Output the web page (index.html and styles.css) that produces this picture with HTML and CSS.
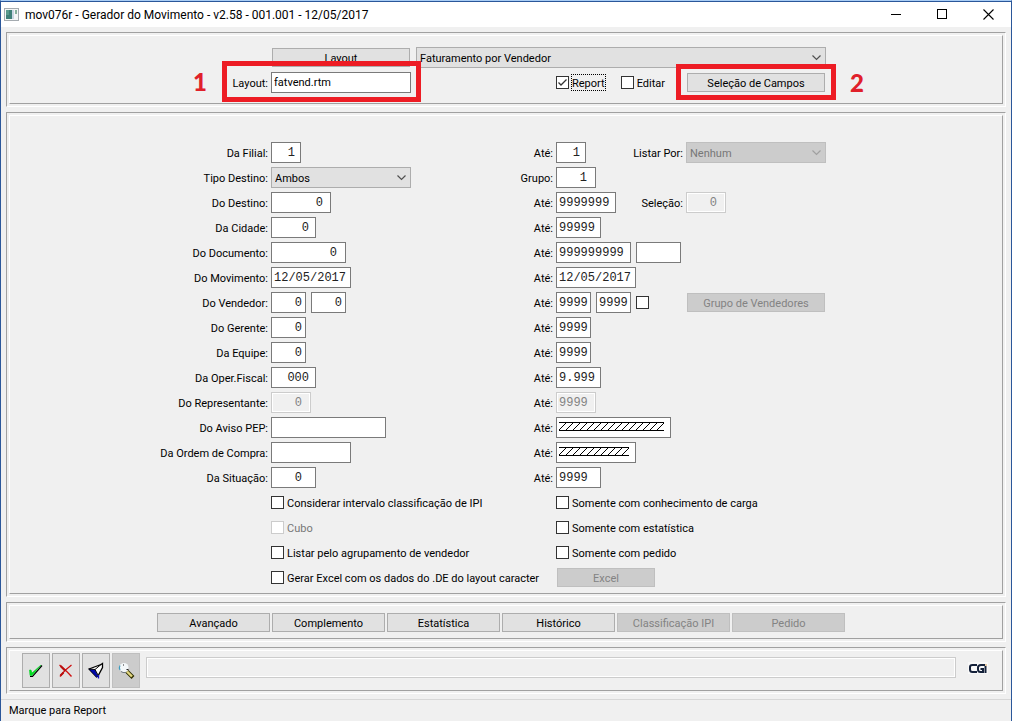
FILE: index.html
```html
<!DOCTYPE html>
<html lang="pt-BR">
<head>
<meta charset="utf-8">
<title>mov076r - Gerador do Movimento</title>
<link rel="stylesheet" href="styles.css">
</head>
<body>
<div class="window">
  <header class="titlebar">
    <svg class="app-icon" width="15" height="13" viewBox="0 0 15 13"><rect x=".5" y=".5" width="14" height="12" fill="#f4f6f6" stroke="#a5abb0"/><rect x="2" y="2" width="6" height="9" fill="#3f8078"/><rect x="2" y="2" width="3" height="5" fill="#5a9a8c"/><rect x="8" y="2" width="2" height="9" fill="#c9d6e2"/><rect x="11" y="2" width="2" height="4" fill="#86b09c"/></svg>
    <h1 class="title">mov076r - Gerador do Movimento - v2.58 - 001.001 - 12/05/2017</h1>
    <div class="window-buttons">
      <button type="button" class="win-btn" aria-label="Minimizar"><svg width="11" height="11" viewBox="0 0 11 11"><path d="M0 5.500h10" stroke="#000"/></svg></button>
      <button type="button" class="win-btn" aria-label="Maximizar"><svg width="11" height="11" viewBox="0 0 11 11"><rect x=".5" y=".5" width="9" height="9" fill="none" stroke="#000"/></svg></button>
      <button type="button" class="win-btn" aria-label="Fechar"><svg width="11" height="11" viewBox="0 0 11 11"><path d="M.5 .5l10 10M10.500 .5l-10 10" stroke="#000" stroke-width="1.100"/></svg></button>
    </div>
  </header>

  <main class="panels">
    <section class="panel"><div class="panel-inner layout-panel">
      <div class="layout-row">
        <button type="button" class="btn btn-field">Layout</button>
        <select class="select layout-select" aria-label="Modelo de layout"><option>Faturamento por Vendedor</option></select>
      </div>
      <div class="form-grid">
        <label class="label" for="layout">Layout:</label>
        <div class="field"><input class="text w140" id="layout" value="fatvend.rtm"><span class="callout callout-one"><b class="callout-number">1</b></span></div>
        <div class="field from-fourth">
          <label class="check check-report"><input type="checkbox" checked><span class="focused">Report</span></label>
          <label class="check"><input type="checkbox"><span>Editar</span></label>
        </div>
        <div class="field sixth"><button type="button" class="btn btn-field">Seleção de Campos</button><span class="callout callout-two"><b class="callout-number">2</b></span></div>
      </div>
    </div></section>

    <section class="panel main-panel"><div class="panel-inner filter-panel">
      <div class="form-grid">
        <label class="label" for="filial">Da Filial:</label>
        <div class="field"><input class="num w30" id="filial" value="1"></div>
        <label class="label" for="filial2">Até:</label>
        <div class="field"><input class="num w30" id="filial2" value="1"></div>
        <label class="label" for="listar">Listar Por:</label>
        <div class="field"><select class="select w140" id="listar" disabled><option>Nenhum</option></select></div>

        <label class="label first" for="tipo">Tipo Destino:</label>
        <div class="field"><select class="select w140" id="tipo"><option>Ambos</option></select></div>
        <label class="label" for="grupo">Grupo:</label>
        <div class="field"><input class="num w40" id="grupo" value="1"></div>

        <label class="label first" for="destino">Do Destino:</label>
        <div class="field"><input class="num w60" id="destino" value="0"></div>
        <label class="label" for="destino2">Até:</label>
        <div class="field"><input class="num full w60" id="destino2" value="9999999"></div>
        <label class="label" for="selecao">Seleção:</label>
        <div class="field"><input class="num w40" id="selecao" value="0" disabled></div>

        <label class="label first" for="cidade">Da Cidade:</label>
        <div class="field"><input class="num w45" id="cidade" value="0"></div>
        <label class="label" for="cidade2">Até:</label>
        <div class="field"><input class="num full w45" id="cidade2" value="99999"></div>

        <label class="label first" for="documento">Do Documento:</label>
        <div class="field"><input class="num w75" id="documento" value="0"></div>
        <label class="label" for="documento2">Até:</label>
        <div class="field from-fourth"><input class="num full w75" id="documento2" value="999999999"><input class="num w45" aria-label="Série do documento"></div>

        <label class="label first" for="movimento">Do Movimento:</label>
        <div class="field"><input class="num full w80" id="movimento" value="12/05/2017"></div>
        <label class="label" for="movimento2">Até:</label>
        <div class="field"><input class="num full w80" id="movimento2" value="12/05/2017"></div>

        <label class="label first" for="vendedor">Do Vendedor:</label>
        <div class="field"><input class="num w35" id="vendedor" value="0"><input class="num w35" aria-label="Do Vendedor, complemento" value="0"></div>
        <label class="label" for="vendedor2">Até:</label>
        <div class="field"><input class="num full w35" id="vendedor2" value="9999"><input class="num full w35" aria-label="Até o Vendedor, complemento" value="9999"><input type="checkbox" aria-label="Usar grupo de vendedores"></div>
        <div class="field sixth"><button type="button" class="btn btn-field" disabled>Grupo de Vendedores</button></div>

        <label class="label first" for="gerente">Do Gerente:</label>
        <div class="field"><input class="num w35" id="gerente" value="0"></div>
        <label class="label" for="gerente2">Até:</label>
        <div class="field"><input class="num full w35" id="gerente2" value="9999"></div>

        <label class="label first" for="equipe">Da Equipe:</label>
        <div class="field"><input class="num w35" id="equipe" value="0"></div>
        <label class="label" for="equipe2">Até:</label>
        <div class="field"><input class="num full w35" id="equipe2" value="9999"></div>

        <label class="label first" for="fiscal">Da Oper.Fiscal:</label>
        <div class="field"><input class="num w45" id="fiscal" value="000"></div>
        <label class="label" for="fiscal2">Até:</label>
        <div class="field"><input class="num full w45" id="fiscal2" value="9.999"></div>

        <label class="label first" for="repres">Do Representante:</label>
        <div class="field"><input class="num w40" id="repres" value="0" disabled></div>
        <label class="label" for="repres2">Até:</label>
        <div class="field"><input class="num full w40" id="repres2" value="9999" disabled></div>

        <label class="label first" for="aviso">Do Aviso PEP:</label>
        <div class="field"><input class="num full w115" id="aviso"></div>
        <label class="label" for="aviso2">Até:</label>
        <div class="field from-fourth"><input class="num w115 hatch" id="aviso2"></div>

        <label class="label first" for="ordem">Da Ordem de Compra:</label>
        <div class="field"><input class="num full w80" id="ordem"></div>
        <label class="label" for="ordem2">Até:</label>
        <div class="field"><input class="num w80 hatch" id="ordem2"></div>

        <label class="label first" for="situacao">Da Situação:</label>
        <div class="field"><input class="num w45 four-digits" id="situacao" value="0"></div>
        <label class="label" for="situacao2">Até:</label>
        <div class="field"><input class="num full w45" id="situacao2" value="9999"></div>

        <label class="check second"><input type="checkbox"><span>Considerar intervalo classificação de IPI</span></label>
        <label class="check from-fourth"><input type="checkbox"><span>Somente com conhecimento de carga</span></label>
        <label class="check second is-disabled"><input type="checkbox" disabled><span>Cubo</span></label>
        <label class="check from-fourth"><input type="checkbox"><span>Somente com estatística</span></label>
        <label class="check second"><input type="checkbox"><span>Listar pelo agrupamento de vendedor</span></label>
        <label class="check from-fourth"><input type="checkbox"><span>Somente com pedido</span></label>
        <label class="check second"><input type="checkbox"><span>Gerar Excel com os dados do .DE do layout caracter</span></label>
        <div class="field from-fourth"><button type="button" class="btn btn-excel" disabled>Excel</button></div>
      </div>
    </div></section>

    <section class="panel"><div class="panel-inner actions">
      <button type="button" class="btn">Avançado</button>
      <button type="button" class="btn">Complemento</button>
      <button type="button" class="btn">Estatística</button>
      <button type="button" class="btn">Histórico</button>
      <button type="button" class="btn" disabled>Classificação IPI</button>
      <button type="button" class="btn" disabled>Pedido</button>
    </div></section>

    <section class="panel"><div class="panel-inner toolbar">
      <button type="button" class="tool" aria-label="Confirmar"><svg width="16" height="16" viewBox="0 0 16 16"><path d="M2 13.500h2.500L14 2.500" fill="none" stroke="#000" stroke-width="1.200"/><path d="M1.500 7H3l1 3 9-8-9 10.500H2z" fill="#00e020" stroke="#00d020" stroke-width=".6"/></svg></button>
      <button type="button" class="tool" aria-label="Cancelar"><svg width="16" height="16" viewBox="0 0 16 16"><path d="M1.500 2c4 3 7 6 12 11.500M13.500 2C8.500 5.500 5.500 8.500 2 13.500" fill="none" stroke="#d01010" stroke-width="1.400"/><path d="M2.500 3l5 5M2.500 12.500l3-3" stroke="#b81010" stroke-width="2"/></svg></button>
      <button type="button" class="tool" aria-label="Limpar"><svg width="18" height="18" viewBox="0 0 18 18"><path d="M2 7L14 2.500l1.500-1v4L11 14l-1.500 1z" fill="#fff" stroke="#000" stroke-width="1.300"/><path d="M2 7l6 .5 3 6.500-1 1.500z" fill="#0008a8"/><path d="M2 7l6 .5 6-5M8 7.500l3.500 6.500" fill="none" stroke="#000"/><path d="M11.500 13v3.500" stroke="#1010c0" stroke-width="1.300"/></svg></button>
      <button type="button" class="tool tool-pressed" aria-label="Pesquisar" disabled><svg width="18" height="18" viewBox="0 0 18 18"><path d="M10 9.500l6 6" stroke="#303000" stroke-width="4"/><path d="M10 9.500l5 5" stroke="#e4d880" stroke-width="2.400"/><circle cx="7" cy="5.500" r="4.500" fill="#f4f8fa"/><path d="M3 8A4.500 4.500 0 0 1 3 3.500" fill="none" stroke="#3c9cc0" stroke-width="1.200"/><path d="M4 9.500l2 1h3" fill="none" stroke="#707880"/><path d="M6 3h1M9.500 7.500h2" stroke="#222"/></svg></button>
      <input class="text message" aria-label="Mensagem" disabled>
      <svg class="logo" role="img" aria-label="CGI" width="20" height="12" viewBox="0 0 20 12"><rect width="20" height="12" fill="#f8f8f8"/><path d="M9 3H4.500Q2 3 2 5v2.500Q2 10 4.500 10H9M17 3h-4q-3 0-3 2.500v2Q10 10 12.500 10H15V7h-2.500" fill="none" stroke="#14213a" stroke-width="2"/><path d="M17.500 4V11" stroke="#14213a" stroke-width="2"/><path d="M17 3h2" stroke="#d09a50"/></svg>
    </div></section>
  </main>
  <footer class="status">Marque para Report</footer>
</div>
</body>
</html>
```
FILE: styles.css
```css
* { box-sizing: border-box; }

body {
  margin: 0;
  background: #f0f0f0;
  color: #000;
  font: 11px/13px Roboto, "Liberation Sans", sans-serif;
}

button, input, select { margin: 0; font: inherit; color: inherit; border-radius: 0; }

.window {
  display: flex;
  flex-direction: column;
  min-height: 100vh;
  border: 1px solid #2b579a;
  border-top-color: #a9cdf5;
  border-bottom: 0;
}

.titlebar {
  display: flex;
  align-items: center;
  height: 26px;
  padding-left: 3px;
  background: #fff;
  border-top: 1px solid #2b579a;
}
.title { flex: 1; margin: 0 0 0 6px; font: 12px/16px Roboto, sans-serif; }
.window-buttons { display: flex; }
.win-btn {
  display: flex;
  align-items: center;
  justify-content: center;
  width: 46px;
  height: 24px;
  padding: 0;
  border: 0;
  background: none;
}

.panels {
  display: flex;
  flex: 1;
  flex-direction: column;
  gap: 5px;
  padding: 5px;
}
.panel {
  padding: 2px;
  border: 1px solid;
  border-color: #a0a0a0 #fff #fff #a0a0a0;
}
.main-panel { flex: 1; }
.panel-inner {
  height: 100%;
  border: 1px solid;
  border-color: #fff #a0a0a0 #a0a0a0 #fff;
}

.layout-panel { padding: 11px 0 10px; }
.layout-row {
  display: flex;
  gap: 5px;
  align-items: center;
  margin: 0 0 4px 261px;
}
.layout-select { width: 410px; }
.filter-panel { padding: 26px 0 5px; }

.form-grid {
  display: grid;
  grid-template-columns: 258px 242px 37px 74px 50px 1fr;
  grid-auto-rows: 21px;
  gap: 4px 3px;
  align-items: center;
  white-space: nowrap;
}
.label { padding-top: 2px; text-align: right; }
.first { grid-column: 1; }
.second { grid-column: 2 / 4; }
.from-fourth { grid-column: 4 / 6; }
.sixth { grid-column: 6; }
.field { position: relative; display: flex; align-items: center; gap: 5px; }
.field > * { flex: none; }

.text, .num {
  height: 21px;
  padding: 0 2px;
  background: #fff;
  border: 1px solid #7a7a7a;
}
.num { font: 12px/19px "Liberation Mono", monospace; text-align: right; color: #222; }
.num:disabled, .text:disabled {
  background: #f0f0f0;
  border-color: #ccc;
  box-shadow: inset 0 0 0 1px #fff;
  color: #838383;
}
.w30 { width: 30px; padding-right: 5px; }
.w35 { width: 35px; padding-right: 3px; }
.w40 { width: 40px; padding-right: 8px; }
.w45 { width: 45px; padding-right: 6px; }
.w60 { width: 60px; padding-right: 7px; }
.w75 { width: 75px; padding-right: 8px; }
.w80 { width: 80px; }
.w115 { width: 115px; }
.w140 { width: 140px; }
.four-digits { padding-right: 13px; }
.full { padding-right: 0; text-align: left; }

.hatch {
  padding: 4px 6px 6px 2px;
  background:
    url("data:image/svg+xml,%3Csvg xmlns='http://www.w3.org/2000/svg' width='7' height='9'%3E%3Cpath d='M0 .5h7M0 8.500h7M0 8L7 1' stroke='black' fill='none'/%3E%3C/svg%3E") 0 0 repeat-x content-box,
    linear-gradient(#fff, #fff);
}

.select {
  appearance: none;
  height: 21px;
  padding: 1px 20px 0 3px;
  border: 1px solid #adadad;
  background: #e1e1e1 url("data:image/svg+xml,%3Csvg xmlns='http://www.w3.org/2000/svg' width='9' height='6'%3E%3Cpath d='M.5 .5l4 4 4-4' stroke='%23505050' stroke-width='1.200' fill='none'/%3E%3C/svg%3E") no-repeat right 4px center;
}
.select:disabled {
  background-color: #ccc;
  background-image: url("data:image/svg+xml,%3Csvg xmlns='http://www.w3.org/2000/svg' width='9' height='6'%3E%3Cpath d='M.5 .5l4 4 4-4' stroke='%23a0a0a0' stroke-width='1.200' fill='none'/%3E%3C/svg%3E");
  border-color: #bfbfbf;
  color: #777;
  opacity: 1;
}

.btn {
  height: 19px;
  padding: 2px 0 0;
  background: #e1e1e1;
  border: 1px solid #adadad;
}
.btn:disabled { background: #ccc; border-color: #bfbfbf; color: #838383; }
.btn-field { width: 138px; margin: 0 1px; }
.btn-excel { width: 98px; margin-left: 1px; }

.check { display: flex; align-items: center; gap: 3px; }
.check span { padding-top: 2px; }
.check-report { margin-right: 11px; }
input[type="checkbox"] {
  appearance: none;
  flex: none;
  width: 13px;
  height: 13px;
  background: #fff;
  border: 1px solid #333;
}
input[type="checkbox"]:checked {
  background: #fff url("data:image/svg+xml,%3Csvg xmlns='http://www.w3.org/2000/svg' width='11' height='11'%3E%3Cpath d='M1.500 5.500l2.500 2.500L9.500 2.500' stroke='%23333' stroke-width='1.300' fill='none'/%3E%3C/svg%3E");
}
input[type="checkbox"]:disabled { border-color: #ccc; }
.is-disabled { color: #777; }
.focused { outline: 1px dotted #000; }

.callout { position: absolute; border: 5px solid #ed1c24; pointer-events: none; }
.callout-one { top: -11px; left: -49px; width: 199px; height: 41px; }
.callout-two { top: -9px; left: -10px; width: 160px; height: 36px; }
.callout-number {
  position: absolute;
  top: 1px;
  color: #e0202a;
  font: 900 24px/26px Lato, sans-serif;
}
.callout-one .callout-number { top: 3px; right: 209px; }
.callout-two .callout-number { left: 169px; }

.actions { display: flex; gap: 2px; padding: 7px 0 6px 147px; }
.actions .btn { width: 113px; }

.toolbar { display: flex; gap: 2px; align-items: flex-start; padding: 2px 14px 2px 12px; }
.tool {
  display: flex;
  align-items: center;
  justify-content: center;
  width: 28px;
  height: 35px;
  padding: 0;
  background: #e1e1e1;
  border: 1px solid #adadad;
}
.tool-pressed { background: #ccc; border-color: #bfbfbf; }
.message { flex: 1; margin: 4px 10px 0 4px; }
.logo { margin-top: 9px; }

.status { padding: 4px 8px; border-top: 1px solid #d7d7d7; }
```
